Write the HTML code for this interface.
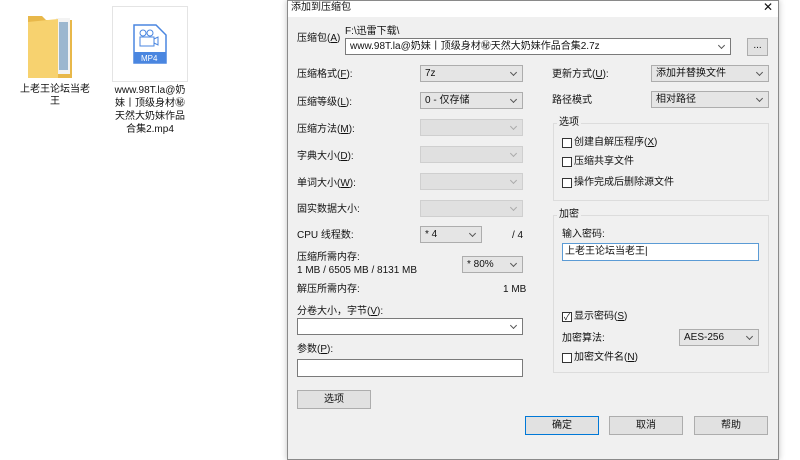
<!DOCTYPE html>
<html><head><meta charset="utf-8"><style>
*{box-sizing:border-box;margin:0;padding:0}
body{width:800px;height:443px;overflow:hidden;background:#fff;font-family:"Liberation Sans","Noto Sans CJK SC",sans-serif;font-size:10px;color:#111;position:relative}
.a{position:absolute;white-space:nowrap;line-height:12px}
.dlg{position:absolute;left:287px;top:0;width:492px;height:460px;background:#f0f0f0;border:1px solid #8a8a8a;box-shadow:0 0 6px rgba(0,0,0,.25)}
.tb{position:absolute;left:287px;top:0;width:492px;height:17px;background:#fff;border:1px solid #8a8a8a;border-bottom:none}
.cb{position:absolute;border:1px solid #adadad;background:#e5e5e5;padding-left:4px;line-height:16px;font-size:10px}
.cb.w{background:#fff;border-color:#7a7a7a}
.cb.d{background:#e0e0e0;border-color:#cfcfcf}
.cb:after{content:"";position:absolute;right:6px;top:4px;width:4px;height:4px;border-right:1px solid #555;border-bottom:1px solid #555;transform:rotate(45deg)}
.cb.d:after{border-color:#aaa}
.in{position:absolute;background:#fff;border:1px solid #7a7a7a}
.btn{position:absolute;background:#e1e1e1;border:1px solid #adadad;text-align:center;line-height:18px}
.grp{position:absolute;border:1px solid #dcdcdc}
.ck{position:absolute;width:10px;height:10px;border:1px solid #333;background:#fff}
</style></head><body>
<svg class="a" style="left:26px;top:12px" width="50" height="68" viewBox="0 0 50 68">
<path d="M2 4h14l4 4h26v58H2z" fill="#e8b84a"/>
<rect x="30" y="6" width="14" height="56" fill="#f3f3f3"/>
<rect x="33" y="10" width="9" height="48" fill="#9cb7cf"/>
<path d="M2 10l30-3v59H2z" fill="#f7d26f"/>
</svg>
<div class="a" style="left:20px;top:84px;font-size:10px;width:70px;text-align:center;white-space:normal">上老王论坛当老王</div>
<div class="a" style="left:112px;top:6px;width:76px;height:76px;border:1px solid #e4e4e4;background:#fff"></div>
<svg class="a" style="left:133px;top:24px" width="34" height="40" viewBox="0 0 34 40">
<path d="M1 1h22l10 10v28H1z" fill="#fff" stroke="#4a86e0" stroke-width="1.5"/>
<rect x="1" y="28" width="32" height="11" fill="#4a86e0"/>
<circle cx="10" cy="9" r="3" fill="none" stroke="#4a86e0"/><circle cx="17" cy="9" r="3" fill="none" stroke="#4a86e0"/>
<rect x="7" y="13" width="14" height="9" fill="none" stroke="#4a86e0"/><path d="M21 15l4-2v8l-4-2" fill="none" stroke="#4a86e0"/>
<text x="8" y="37" font-size="8" fill="#fff" font-family="Liberation Sans">MP4</text>
</svg>
<div class="a" style="left:112px;top:84px;width:76px;text-align:center;white-space:normal;font-size:10px;line-height:13px">www.98T.la@奶妹丨顶级身材㊙天然大奶妹作品合集2.mp4</div>

<div class="dlg"></div>
<div class="tb"></div>
<div class="a" style="left:291px;top:2px">添加到压缩包</div>
<div class="a" style="left:763px;top:1px;font-size:12px">✕</div>

<div class="a" style="left:297px;top:33px">压缩包(<u>A</u>)</div>
<div class="a" style="left:345px;top:26px">F:\迅雷下载\</div>
<div class="cb w" style="left:345px;top:38px;width:386px;height:17px;line-height:15px">www.98T.la@奶妹丨顶级身材㊙天然大奶妹作品合集2.7z</div>
<div class="btn" style="left:747px;top:38px;width:21px;height:18px;line-height:14px">...</div>

<div class="a" style="left:297px;top:69px">压缩格式(<u>F</u>):</div>
<div class="cb" style="left:420px;top:65px;width:103px;height:17px">7z</div>
<div class="a" style="left:552px;top:69px">更新方式(<u>U</u>):</div>
<div class="cb" style="left:651px;top:65px;width:118px;height:17px">添加并替换文件</div>

<div class="a" style="left:297px;top:97px">压缩等级(<u>L</u>):</div>
<div class="cb" style="left:420px;top:92px;width:103px;height:17px">0 - 仅存储</div>
<div class="a" style="left:552px;top:95px">路径模式</div>
<div class="cb" style="left:651px;top:91px;width:118px;height:17px">相对路径</div>

<div class="a" style="left:297px;top:124px">压缩方法(<u>M</u>):</div>
<div class="cb d" style="left:420px;top:119px;width:103px;height:17px"></div>
<div class="a" style="left:297px;top:151px">字典大小(<u>D</u>):</div>
<div class="cb d" style="left:420px;top:146px;width:103px;height:17px"></div>
<div class="a" style="left:297px;top:178px">单词大小(<u>W</u>):</div>
<div class="cb d" style="left:420px;top:173px;width:103px;height:17px"></div>
<div class="a" style="left:297px;top:204px">固实数据大小:</div>
<div class="cb d" style="left:420px;top:200px;width:103px;height:17px"></div>

<div class="a" style="left:297px;top:230px">CPU 线程数:</div>
<div class="cb" style="left:420px;top:226px;width:62px;height:17px">* 4</div>
<div class="a" style="left:512px;top:230px">/ 4</div>
<div class="a" style="left:297px;top:252px">压缩所需内存:</div>
<div class="a" style="left:297px;top:265px">1 MB / 6505 MB / 8131 MB</div>
<div class="cb" style="left:462px;top:256px;width:61px;height:17px">* 80%</div>
<div class="a" style="left:297px;top:284px">解压所需内存:</div>
<div class="a" style="left:503px;top:284px">1 MB</div>
<div class="a" style="left:297px;top:306px">分卷大小，字节(<u>V</u>):</div>
<div class="cb w" style="left:297px;top:318px;width:226px;height:17px"></div>
<div class="a" style="left:297px;top:344px">参数(<u>P</u>):</div>
<div class="in" style="left:297px;top:359px;width:226px;height:18px"></div>
<div class="btn" style="left:297px;top:390px;width:74px;height:19px">选项</div>

<div class="grp" style="left:553px;top:123px;width:216px;height:78px"></div>
<div class="a" style="left:557px;top:117px;background:#f0f0f0;padding:0 2px">选项</div>
<div class="ck" style="left:562px;top:138px"></div><div class="a" style="left:574px;top:137px">创建自解压程序(<u>X</u>)</div>
<div class="ck" style="left:562px;top:157px"></div><div class="a" style="left:574px;top:156px">压缩共享文件</div>
<div class="ck" style="left:562px;top:178px"></div><div class="a" style="left:574px;top:177px">操作完成后删除源文件</div>

<div class="grp" style="left:553px;top:215px;width:216px;height:158px"></div>
<div class="a" style="left:557px;top:209px;background:#f0f0f0;padding:0 2px">加密</div>
<div class="a" style="left:562px;top:229px">输入密码:</div>
<div class="in" style="left:562px;top:243px;width:197px;height:18px;border-color:#5b9bd5;padding-left:2px;line-height:15px">上老王论坛当老王|</div>
<div class="ck" style="left:562px;top:312px;font-size:9px;line-height:8px;text-align:center">✓</div><div class="a" style="left:574px;top:311px">显示密码(<u>S</u>)</div>
<div class="a" style="left:562px;top:333px">加密算法:</div>
<div class="cb" style="left:679px;top:329px;width:80px;height:17px">AES-256</div>
<div class="ck" style="left:562px;top:353px"></div><div class="a" style="left:574px;top:352px">加密文件名(<u>N</u>)</div>

<div class="btn" style="left:525px;top:416px;width:74px;height:19px;border:1px solid #0078d7;line-height:17px">确定</div>
<div class="btn" style="left:609px;top:416px;width:74px;height:19px">取消</div>
<div class="btn" style="left:694px;top:416px;width:74px;height:19px">帮助</div>
</body></html>
